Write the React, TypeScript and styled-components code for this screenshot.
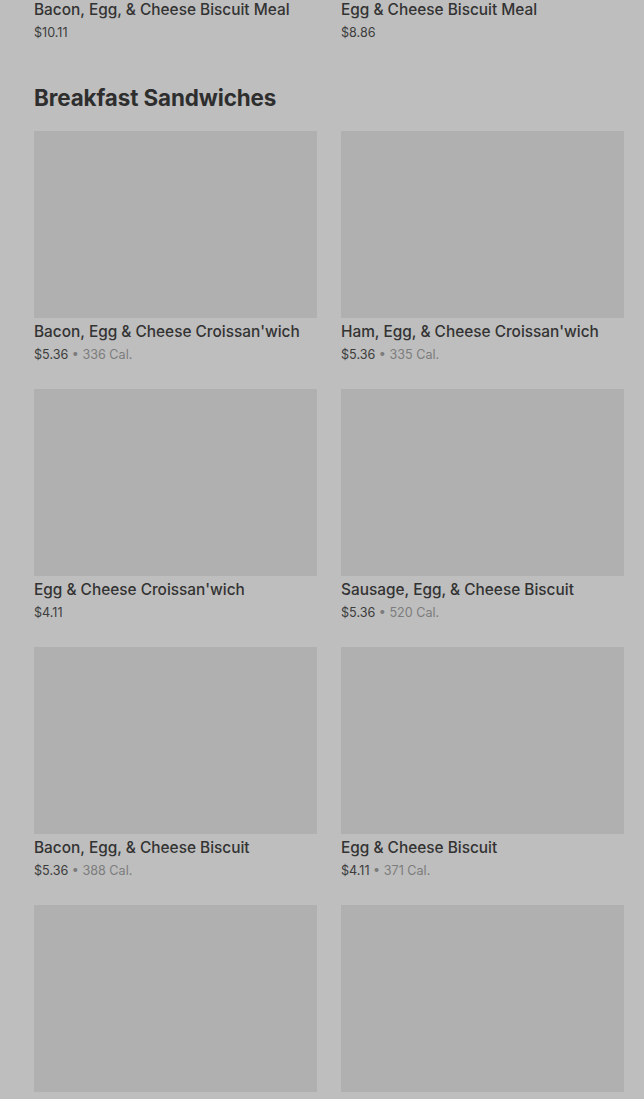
import React from "react";
import styled, { createGlobalStyle } from "styled-components";

const GlobalStyle = createGlobalStyle`
  html, body {
    margin: 0;
    padding: 0;
    background: #bebebe;
    font-family: Inter, "Noto Sans", Arial, sans-serif;
    overflow: hidden;
  }
`;

// the page is scrolled down, so the previous section's last row peeks in
const Page = styled.div`
  margin-top: -191px;
  padding: 0 20px 40px 34px;
`;

const Section = styled.section`
  display: flex;
  flex-direction: column;
`;

const Heading = styled.h2`
  margin: 39px 0 17px;
  font-size: 22.4px;
  line-height: 32px;
  font-weight: 700;
  color: #2e2e2e;
  letter-spacing: -0.1px;
`;

const Grid = styled.div`
  display: grid;
  grid-template-columns: minmax(0, 1fr) minmax(0, 1fr);
  column-gap: 24px;
  row-gap: 24px;
`;

const Card = styled.div`
  display: flex;
  flex-direction: column;
`;

const Thumb = styled.div`
  height: 187px;
  background: #b0b0b0;
`;

const Title = styled.div`
  margin-top: 2px;
  font-size: 15.4px;
  line-height: 24px;
  font-weight: 500;
  color: #333333;
  white-space: nowrap;
`;

const Meta = styled.div`
  font-size: 12.6px;
  line-height: 21px;
  color: #3c3c3c;
`;

const Cal = styled.span`
  color: #7c7c7c;
`;

type Item = { name?: string; price?: string; cal?: string };

const meals: Item[] = [
  { name: "Bacon, Egg, & Cheese Biscuit Meal", price: "$10.11" },
  { name: "Egg & Cheese Biscuit Meal", price: "$8.86" },
];

const sandwiches: Item[] = [
  { name: "Bacon, Egg & Cheese Croissan'wich", price: "$5.36", cal: "336 Cal." },
  { name: "Ham, Egg, & Cheese Croissan'wich", price: "$5.36", cal: "335 Cal." },
  { name: "Egg & Cheese Croissan'wich", price: "$4.11" },
  { name: "Sausage, Egg, & Cheese Biscuit", price: "$5.36", cal: "520 Cal." },
  { name: "Bacon, Egg, & Cheese Biscuit", price: "$5.36", cal: "388 Cal." },
  { name: "Egg & Cheese Biscuit", price: "$4.11", cal: "371 Cal." },
  {},
  {},
];

const ItemCard: React.FC<{ item: Item }> = ({ item }) => (
  <Card>
    <Thumb />
    {item.name && <Title>{item.name}</Title>}
    {item.price && (
      <Meta>
        {item.price}
        {item.cal && <Cal> • {item.cal}</Cal>}
      </Meta>
    )}
  </Card>
);

const App: React.FC = () => {
  return (
    <>
      <GlobalStyle />
      <Page>
        <Section>
          <Grid>
            {meals.map((m, i) => (
              <ItemCard key={i} item={m} />
            ))}
          </Grid>
        </Section>
        <Section>
          <Heading>Breakfast Sandwiches</Heading>
          <Grid>
            {sandwiches.map((s, i) => (
              <ItemCard key={i} item={s} />
            ))}
          </Grid>
        </Section>
      </Page>
    </>
  );
};

export default App;
